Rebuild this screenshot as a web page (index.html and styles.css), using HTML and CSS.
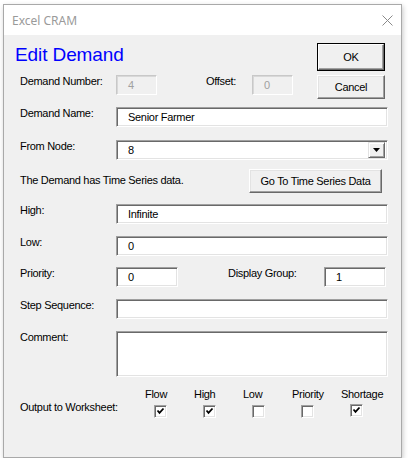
FILE: index.html
```html
<!DOCTYPE html>
<html>
<head>
<meta charset="utf-8">
<link rel="stylesheet" href="styles.css">
</head>
<body>
<div class="window">
  <div class="titlebar">
    <span class="title">Excel CRAM</span>
    <svg class="close" width="11" height="11" viewBox="0 0 11 11"><path d="M0.5 0.5 L10.5 10.5 M10.5 0.5 L0.5 10.5" stroke="#8a8a8a" stroke-width="1" fill="none"/></svg>
  </div>
  <div class="client">
    <div class="top">
      <div class="top-left">
        <h1 class="heading">Edit Demand</h1>
        <div class="row">
          <span class="label">Demand Number:</span>
          <div class="field disabled w41">4</div>
          <span class="label offset-label">Offset:</span>
          <div class="field disabled w41">0</div>
        </div>
      </div>
      <div class="buttons">
        <div class="btn default"><div class="btn-inner">OK</div></div>
        <div class="btn cancel">Cancel</div>
      </div>
    </div>

    <div class="row r-name">
      <span class="label">Demand Name:</span>
      <div class="field grow">Senior Farmer</div>
    </div>
    <div class="row r-node">
      <span class="label">From Node:</span>
      <div class="field grow combo">
        <span class="combo-text">8</span>
        <div class="drop"><svg width="7" height="4" viewBox="0 0 7 4"><path d="M0 0 H7 L3.5 4 Z" fill="#000"/></svg></div>
      </div>
    </div>
    <div class="row r-ts">
      <span class="ts-text">The Demand has Time Series data.</span>
      <div class="btn ts-btn">Go To Time Series Data</div>
    </div>
    <div class="row r-high">
      <span class="label">High:</span>
      <div class="field grow">Infinite</div>
    </div>
    <div class="row r-low">
      <span class="label">Low:</span>
      <div class="field grow">0</div>
    </div>
    <div class="row r-prio">
      <span class="label">Priority:</span>
      <div class="field w62">0</div>
      <span class="label group-label">Display Group:</span>
      <div class="field w62">1</div>
    </div>
    <div class="row r-step">
      <span class="label">Step Sequence:</span>
      <div class="field grow"></div>
    </div>
    <div class="row r-comment">
      <span class="label">Comment:</span>
      <div class="field grow tall"></div>
    </div>
    <div class="output">
      <span class="out-label">Output to Worksheet:</span>
      <div class="col"><span>Flow</span><span class="cb checked"><svg width="9" height="9" viewBox="0 0 9 9"><path d="M1.5 3.5 L3.5 5.8 L7.5 1.5" stroke="#000" stroke-width="1.8" fill="none"/></svg></span></div>
      <div class="col"><span>High</span><span class="cb checked"><svg width="9" height="9" viewBox="0 0 9 9"><path d="M1.5 3.5 L3.5 5.8 L7.5 1.5" stroke="#000" stroke-width="1.8" fill="none"/></svg></span></div>
      <div class="col"><span>Low</span><span class="cb"></span></div>
      <div class="col"><span>Priority</span><span class="cb"></span></div>
      <div class="col short"><span>Shortage</span><span class="cb checked"><svg width="9" height="9" viewBox="0 0 9 9"><path d="M1.5 3.5 L3.5 5.8 L7.5 1.5" stroke="#000" stroke-width="1.8" fill="none"/></svg></span></div>
    </div>
  </div>
</div>
</body>
</html>
```
FILE: styles.css
```css
body {
  margin: 0;
  background: #ffffff;
  font-family: "Liberation Sans", Arial, sans-serif;
  font-size: 11px;
  letter-spacing: -0.3px;
  color: #000;
}
.window {
  margin: 4px 0 0 3px;
  width: 399px;
  height: 454px;
  box-sizing: border-box;
  border: 1px solid #a9a9a9;
  box-shadow: 1px 2px 5px rgba(0, 0, 0, 0.22);
  display: flex;
  flex-direction: column;
}
.titlebar {
  height: 30px;
  flex: none;
  background: #ffffff;
  display: flex;
  align-items: center;
  justify-content: space-between;
  padding: 0 8px 0 8px;
}
.title {
  font-family: "Noto Sans", "Open Sans", sans-serif;
  font-size: 12px;
  letter-spacing: 0;
  color: #9a9a9a;
}
.close { display: block; }
.client {
  flex: 1;
  background: #f0f0f0;
  padding: 8px 13px 0 16px;
}
.top {
  display: flex;
  justify-content: space-between;
  align-items: flex-start;
}
.heading {
  margin: 0;
  font-weight: normal;
  font-size: 19px;
  line-height: 24px;
  letter-spacing: -0.1px;
  color: #0000ff;
  margin-left: -5px;
}
.top-left .row { margin-top: 8px; }
.buttons {
  width: 68px;
  margin-right: 3px;
  display: flex;
  flex-direction: column;
  gap: 4px;
}
.btn {
  box-sizing: border-box;
  background: #f0f0f0;
  border: 1px solid;
  border-color: #ffffff #696969 #696969 #ffffff;
  box-shadow: inset -1px -1px #a0a0a0, inset 1px 1px #e3e3e3;
  display: flex;
  align-items: center;
  justify-content: center;
  font-size: 11px;
}
.btn.default {
  height: 28px;
  border: 1px solid #000;
  box-shadow: none;
  padding: 0;
}
.btn-inner {
  box-sizing: border-box;
  width: 100%;
  height: 100%;
  border: 1px solid;
  border-color: #ffffff #696969 #696969 #ffffff;
  box-shadow: inset -1px -1px #a0a0a0;
  display: flex;
  align-items: center;
  justify-content: center;
}
.btn.cancel { height: 24px; }

.row {
  display: flex;
  align-items: flex-start;
}
.label {
  width: 96px;
  flex: none;
  line-height: 13px;
  white-space: nowrap;
}
.field {
  box-sizing: border-box;
  height: 20px;
  background: #ffffff;
  border: 1px solid;
  border-color: #a0a0a0 #ffffff #ffffff #a0a0a0;
  box-shadow: inset 1px 1px #696969, inset -1px -1px #e3e3e3;
  display: flex;
  align-items: center;
  padding-left: 11px;
  line-height: 13px;
}
.field.disabled {
  background: #f0f0f0;
  color: #a0a0a0;
  border-color: #c8c8c8 #ffffff #ffffff #c8c8c8;
  box-shadow: inset 1px 1px #d8d8d8;
}
.w41 { width: 41px; flex: none; }
.w62 { width: 62px; flex: none; }
.grow { flex: 1; }
.offset-label { width: 46px; margin-left: 49px; }
.group-label { width: 96px; margin-left: 50px; }

.r-name { margin-top: 8px; height: 33px; }
.r-node { height: 29px; }
.r-ts { height: 35px; justify-content: space-between; }
.r-high { height: 32px; }
.r-low { height: 31px; }
.r-prio { height: 32px; }
.r-step { height: 32px; }
.r-comment { height: 57px; }
.tall { height: 46px; }

.combo { padding-right: 2px; justify-content: space-between; }
.combo-text { line-height: 13px; }
.drop {
  box-sizing: border-box;
  width: 17px;
  height: 16px;
  background: #f0f0f0;
  border: 1px solid;
  border-color: #e3e3e3 #696969 #696969 #e3e3e3;
  box-shadow: inset 1px 1px #ffffff, inset -1px -1px #a0a0a0;
  display: flex;
  align-items: center;
  justify-content: center;
}
.drop svg { display: block; }

.ts-text { padding-top: 5px; line-height: 13px; }
.ts-btn { width: 133px; height: 24px; margin-right: 6px; }

.output {
  display: flex;
  align-items: flex-start;
}
.out-label {
  width: 125px;
  flex: none;
  padding-top: 13px;
  line-height: 13px;
  white-space: nowrap;
}
.col {
  width: 49px;
  flex: none;
  display: flex;
  flex-direction: column;
  line-height: 13px;
  white-space: nowrap;
}
.cb {
  box-sizing: border-box;
  width: 13px;
  height: 13px;
  margin: 4px 0 0 9px;
  background: #ffffff;
  border: 1px solid;
  border-color: #a0a0a0 #ffffff #ffffff #a0a0a0;
  box-shadow: inset 1px 1px #696969, inset -1px -1px #e3e3e3;
  display: flex;
  align-items: center;
  justify-content: center;
}
.cb svg { display: block; }
.col.short .cb { margin-top: 3px; }
```
